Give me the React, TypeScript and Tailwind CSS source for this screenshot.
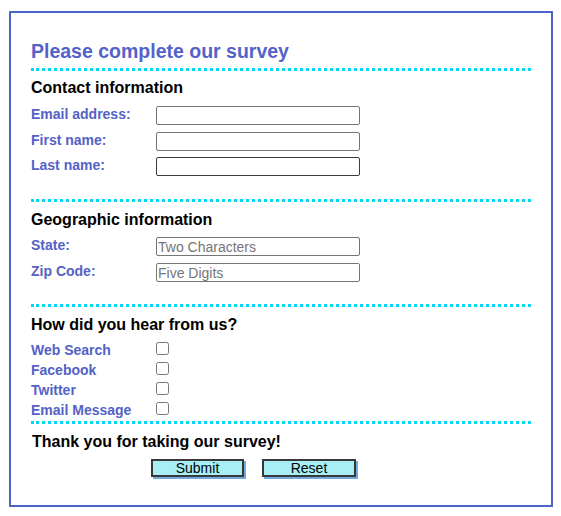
import React from 'react'

const contactFields = [
  { label: 'Email address:', gap: 'mt-[9px]', dark: false },
  { label: 'First name:', gap: 'mt-[7px]', dark: false },
  { label: 'Last name:', gap: 'mt-[6px]', dark: true },
]

const sources = ['Web Search', 'Facebook', 'Twitter', 'Email Message']

const Divider = ({ className }: { className: string }) => (
  <div className={'w-full border-t-[3px] border-dotted border-[#00d8f6] ' + className} />
)

const Heading = ({ text, className }: { text: string; className: string }) => (
  <h2 className={'text-[16px] leading-[18px] font-bold text-black ' + className}>{text}</h2>
)

const Field = ({
  label,
  placeholder,
  className,
  dark,
}: {
  label: string
  placeholder?: string
  className: string
  dark?: boolean
}) => (
  <div className={'flex items-start h-[19px] ' + className}>
    <label className="w-[125px] text-[14px] leading-[16px] font-bold text-[#5362c6]">
      {label}
    </label>
    <input
      type="text"
      placeholder={placeholder}
      className={
        'w-[204px] h-[19px] border rounded-[2px] bg-white px-[1px] text-[14px] leading-[16px] text-black placeholder:text-[#757575] outline-none ' +
        (dark ? 'border-[#3c3c3c]' : 'border-[#767676]')
      }
    />
  </div>
)

const App = () => {
  return (
    <div className="pl-[9px] pt-[11px] bg-white min-h-[516px] font-['Liberation_Sans',Arial,sans-serif]">
      <form
        className="w-[544px] h-[496px] border-2 border-[#4c66c8] px-[20px] pt-[27px] flex flex-col"
        onSubmit={(e) => e.preventDefault()}
      >
        <h1 className="text-[19.5px] leading-[23px] font-bold text-[#5362c9]">
          Please complete our survey
        </h1>
        <Divider className="mt-[5px]" />

        <Heading text="Contact information" className="mt-[8px]" />
        {contactFields.map((f) => (
          <Field key={f.label} label={f.label} className={f.gap} dark={f.dark} />
        ))}

        <Divider className="mt-[23px]" />
        <Heading text="Geographic information" className="mt-[9px]" />
        <Field label="State:" placeholder="Two Characters" className="mt-[8px]" />
        <Field label="Zip Code:" placeholder="Five Digits" className="mt-[7px]" />

        <Divider className="mt-[22px]" />
        <Heading text="How did you hear from us?" className="mt-[9px]" />
        <div className="mt-[8px] flex flex-col gap-[4px]">
          {sources.map((s) => (
            <div key={s} className="flex items-start h-[16px]">
              <label className="w-[125px] text-[14px] leading-[16px] font-bold text-[#5362c6]">
                {s}
              </label>
              <input type="checkbox" className="w-[13px] h-[13px] mt-0" />
            </div>
          ))}
        </div>

        <Divider className="mt-[3px]" />
        <Heading text="Thank you for taking our survey!" className="mt-[9px] pl-[1px]" />
        <div className="mt-[8px] ml-[120px] flex gap-[18px]">
          <button
            type="submit"
            className="w-[93px] h-[18px] border-2 border-[#383838] bg-[#a8eef5] shadow-[2px_2px_0_#72aadf] text-[14px] leading-[14px] text-black"
          >
            Submit
          </button>
          <button
            type="reset"
            className="w-[94px] h-[18px] border-2 border-[#383838] bg-[#a8eef5] shadow-[2px_2px_0_#72aadf] text-[14px] leading-[14px] text-black"
          >
            Reset
          </button>
        </div>
      </form>
    </div>
  )
}

export default App
